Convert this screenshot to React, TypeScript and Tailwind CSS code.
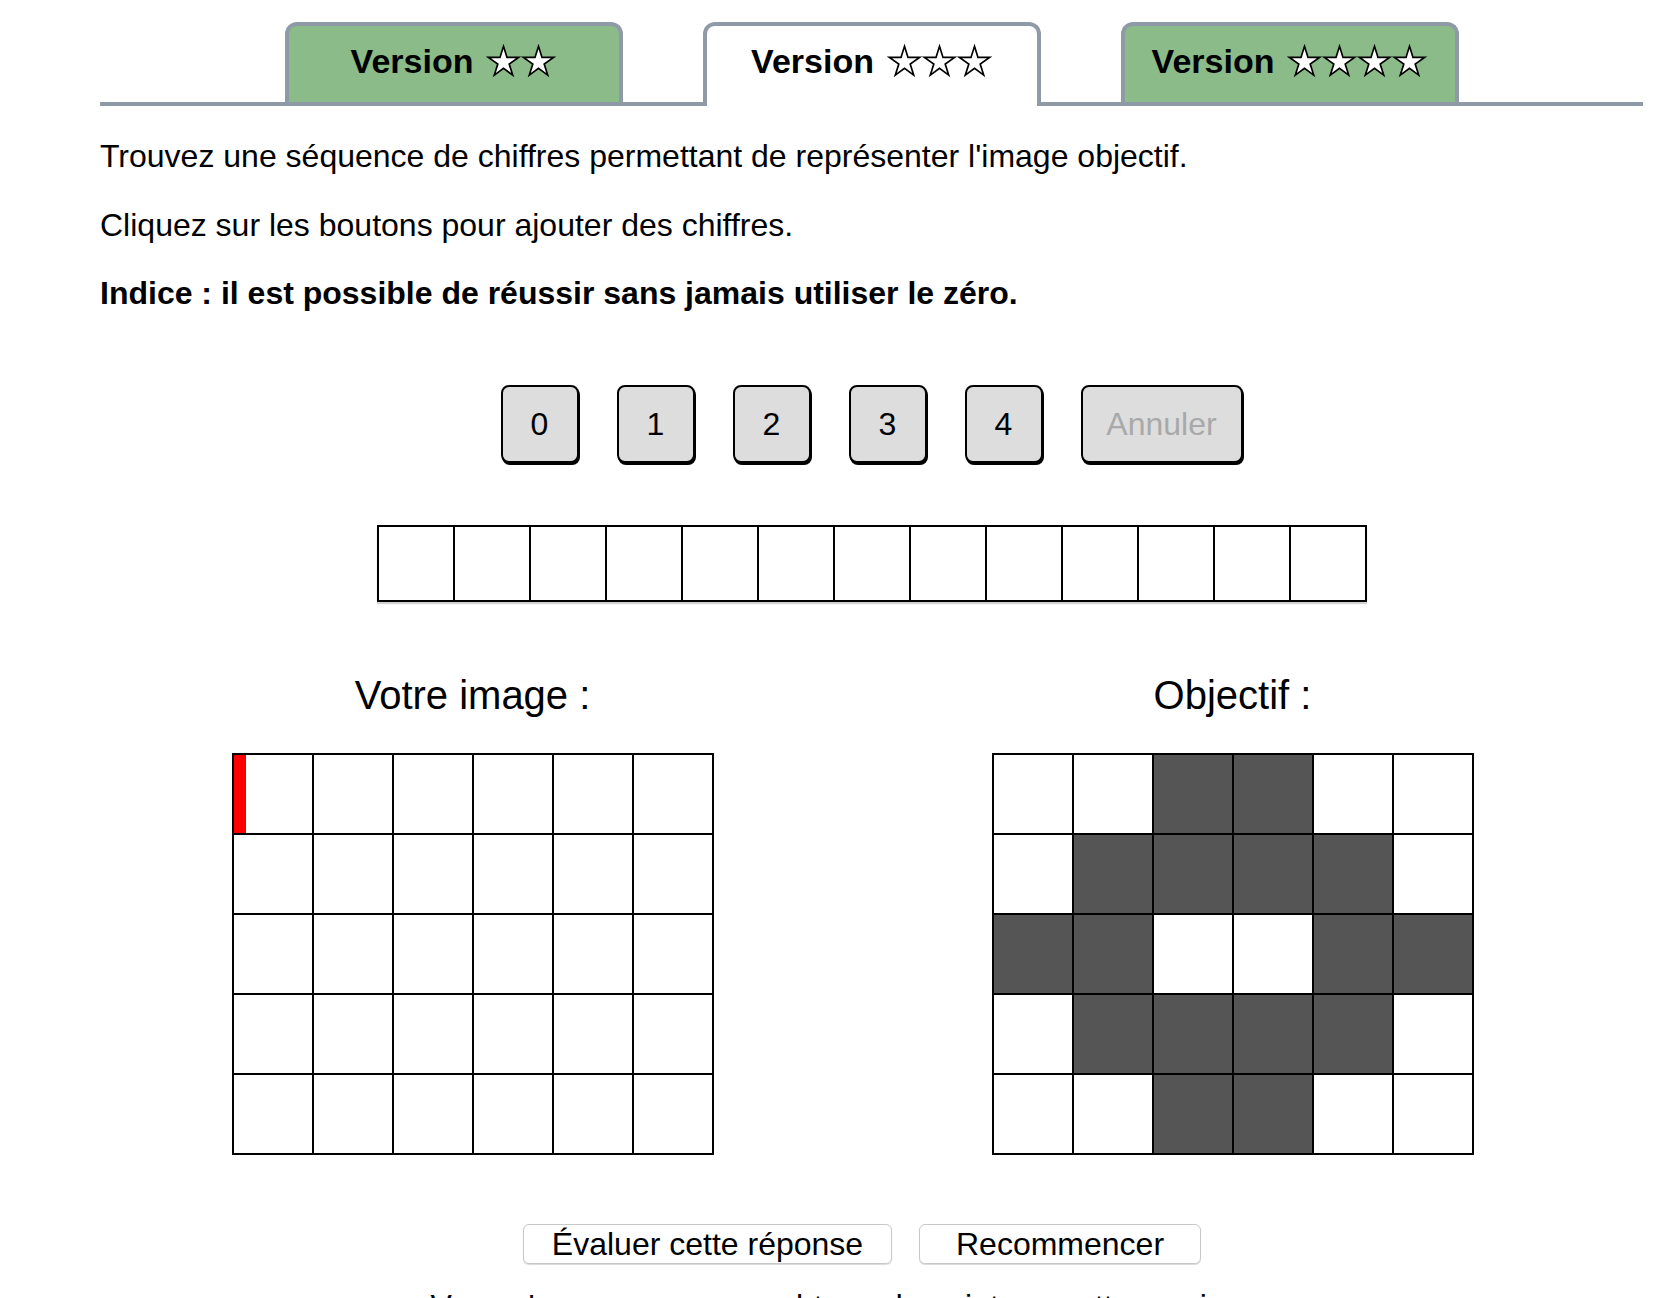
const TABS = [
  { stars: 2, active: false },
  { stars: 3, active: true },
  { stars: 4, active: false },
]

// 1 = case noire dans l'image objectif
const TARGET = [
  [0, 0, 1, 1, 0, 0],
  [0, 1, 1, 1, 1, 0],
  [1, 1, 0, 0, 1, 1],
  [0, 1, 1, 1, 1, 0],
  [0, 0, 1, 1, 0, 0],
]

function Star() {
  return (
    <svg width="35" height="35" viewBox="0 0 24 24" className="block">
      <polygon
        points="12,1.6 14.4,9.2 22.3,9.2 15.9,13.8 18.3,21.3 12,16.7 5.7,21.3 8.1,13.8 1.7,9.2 9.6,9.2"
        fill="#fff"
        stroke="#000"
        strokeWidth="1.15"
      />
    </svg>
  )
}

function Grid({ cells, cursor }: { cells: number[][]; cursor?: boolean }) {
  return (
    <div className="grid grid-cols-[repeat(6,78px)] gap-[2px] bg-black p-[2px]">
      {cells.flatMap((row, r) =>
        row.map((v, c) => (
          <div key={r + '-' + c} className={'flex h-[78px] ' + (v ? 'bg-[#555555]' : 'bg-white')}>
            {cursor && r === 0 && c === 0 && <div className="h-full w-[12px] bg-[#ff0000]" />}
          </div>
        ))
      )}
    </div>
  )
}

const EMPTY = TARGET.map(row => row.map(() => 0))

export default function App() {
  return (
    <div className="min-h-screen bg-white font-['Liberation_Sans',Arial,sans-serif] text-black">
      <div className="ml-[100px] w-[1543px]">

        {/* Onglets de version */}
        <div className="flex items-end justify-center gap-[80px] border-b-4 border-[#8e9ba7] pt-[22px]">
          {TABS.map(t => (
            <div
              key={t.stars}
              className={
                'flex w-[338px] items-center justify-center rounded-t-[12px] border-4 border-b-0 border-[#8e9ba7] text-[34px] font-bold ' +
                (t.active ? 'relative -mb-[4px] h-[84px] bg-white pb-[9px]' : 'h-[80px] bg-[#8bbb88] pb-[5px]')
              }
            >
              <span>Version</span>
              <span className="ml-[13px] flex">
                {Array.from({ length: t.stars }).map((_, i) => <Star key={i} />)}
              </span>
            </div>
          ))}
        </div>

        {/* Consignes */}
        <p className="mt-[32px] text-[32px] leading-[36.7px]">
          Trouvez une séquence de chiffres permettant de représenter l'image objectif.
        </p>
        <p className="mt-[32px] text-[32px] leading-[36.7px]">
          Cliquez sur les boutons pour ajouter des chiffres.
        </p>
        <p className="mt-[32px] text-[32px] font-bold leading-[36.7px]">
          Indice : il est possible de réussir sans jamais utiliser le zéro.
        </p>

        {/* Boutons chiffres */}
        <div className="mt-[73px] flex justify-center gap-[38px]">
          {[0, 1, 2, 3, 4].map(d => (
            <button
              key={d}
              className="flex h-[78px] w-[78px] items-center justify-center rounded-[8px] border-2 border-black bg-[#dddddd] text-[32px] shadow-[1px_2px_0_0_#000]"
            >
              {d}
            </button>
          ))}
          <button className="flex h-[78px] w-[162px] items-center justify-center rounded-[8px] border-2 border-black bg-[#dddddd] text-[32px] text-[#a9a9a9] shadow-[1px_2px_0_0_#000]">
            Annuler
          </button>
        </div>

        {/* Séquence */}
        <div className="mt-[62px] flex justify-center">
          <div className="grid grid-cols-[repeat(13,74px)] gap-[2px] bg-black p-[2px] shadow-[0_2px_1px_rgba(0,0,0,0.18)]">
            {Array.from({ length: 13 }).map((_, i) => (
              <div key={i} className="h-[73px] bg-white" />
            ))}
          </div>
        </div>

        {/* Images */}
        <div className="mt-[70px] flex">
          <div className="flex w-[745px] flex-col items-center">
            <h2 className="text-[40px] leading-[46px]">Votre image :</h2>
            <div className="mt-[35px]">
              <Grid cells={EMPTY} cursor />
            </div>
          </div>
          <div className="flex w-[775px] flex-col items-center">
            <h2 className="text-[40px] leading-[46px]">Objectif :</h2>
            <div className="mt-[35px]">
              <Grid cells={TARGET} />
            </div>
          </div>
        </div>

        {/* Validation */}
        <div className="mt-[69px] flex justify-center gap-[27px] pr-[19px]">
          <button className="h-[40px] w-[369px] rounded-[6px] border border-[#c9c9c9] bg-white text-[32px] leading-[38px] shadow-[0_1px_1px_rgba(0,0,0,0.15)]">
            Évaluer cette réponse
          </button>
          <button className="h-[40px] w-[282px] rounded-[6px] border border-[#c9c9c9] bg-white text-[32px] leading-[38px] shadow-[0_1px_1px_rgba(0,0,0,0.15)]">
            Recommencer
          </button>
        </div>

        <p className="mt-[24px] pr-[70px] text-center text-[32px] leading-[36.7px]">
          Vous n'avez pas encore obtenu de point sur cette version
        </p>
      </div>
    </div>
  )
}
